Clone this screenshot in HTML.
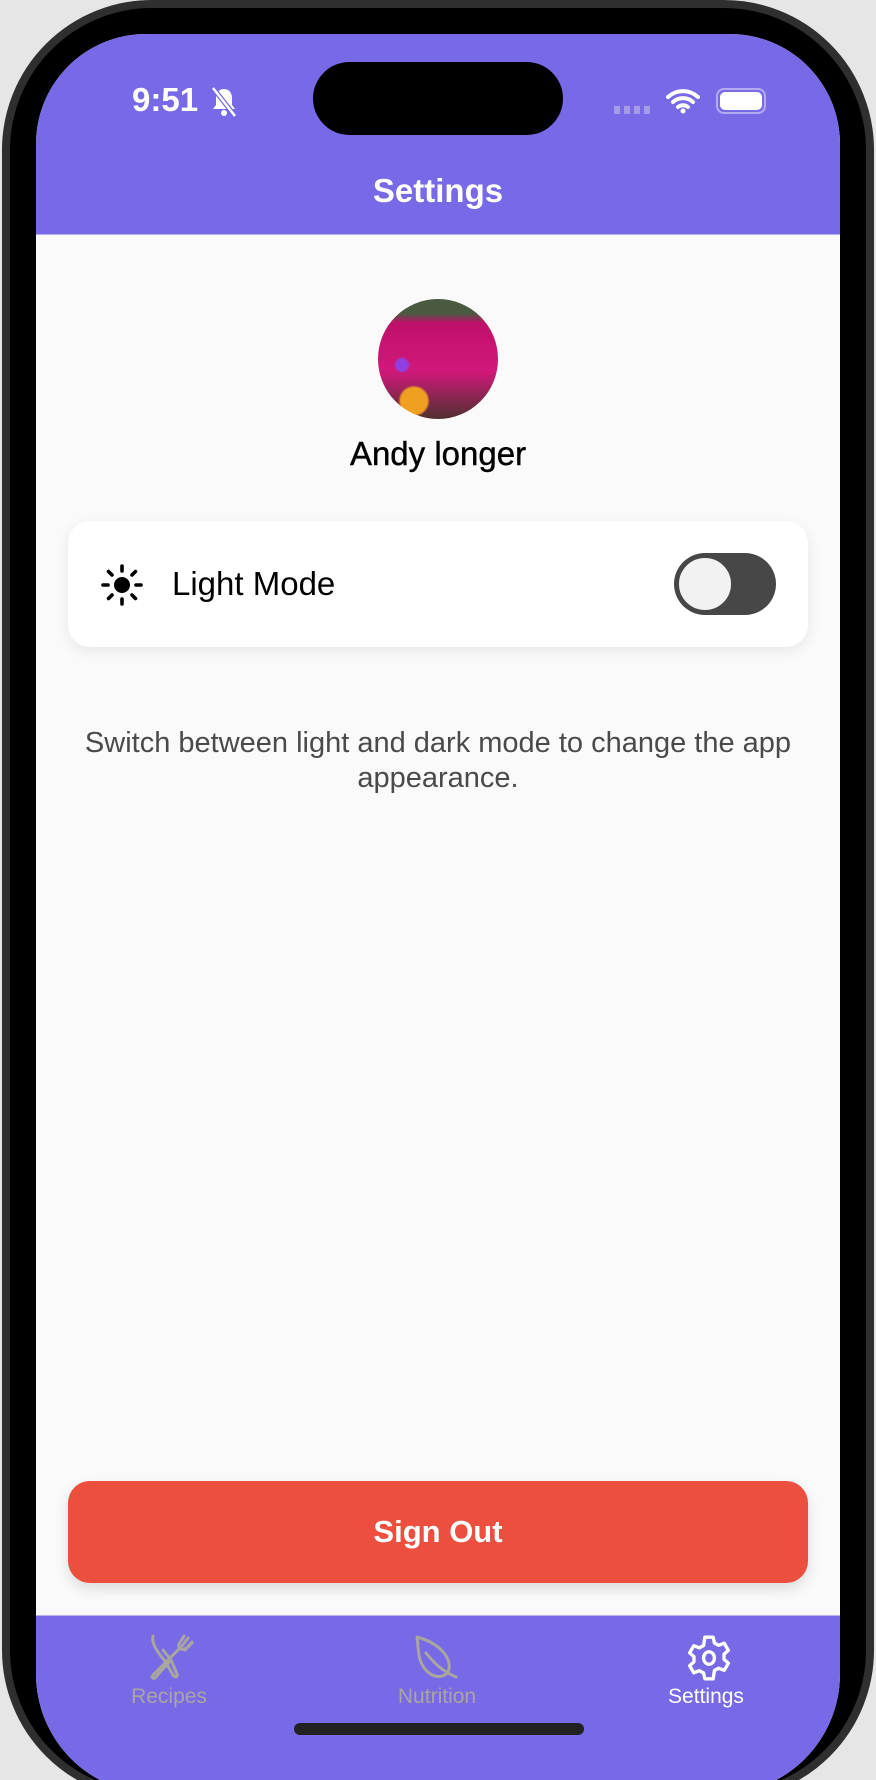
<!DOCTYPE html>
<html><head><meta charset="utf-8"><style>
*{margin:0;padding:0;box-sizing:border-box}
html{width:876px;height:1780px;overflow:hidden}
body{width:876px;height:1780px;overflow:hidden;background:#e6e6e6;font-family:"Liberation Sans",sans-serif;position:relative}
.frame{position:absolute;left:2px;top:0;width:872px;height:1800px;border-radius:150px;background:#000;border:8px solid #2f2f2f}
.screen{position:absolute;left:36px;top:34px;width:804px;height:1760px;border-radius:110px 110px 120px 120px;background:#fafafa;overflow:hidden}
.hdr{position:absolute;left:0;top:0;width:804px;height:201px;background:#7869e6;border-bottom:1px solid #b9b2ef}
.island{position:absolute;left:277px;top:28px;width:250px;height:73px;border-radius:37px;background:#000}
.time{position:absolute;left:96px;top:47px;color:#fff;font-size:33px;font-weight:bold}
.title{position:absolute;left:0;width:804px;top:138px;text-align:center;color:#fff;font-size:33px;font-weight:bold}
.av{position:absolute;left:342px;top:265px;width:120px;height:120px;border-radius:50%;
background:radial-gradient(circle at 30% 85%,#f0a020 0 10%,transparent 12%),radial-gradient(circle at 20% 55%,#9040e0 0 5%,transparent 7%),linear-gradient(#4a5a40 0 12%,#c0106a 20%,#d0187a 60%,#503030 100%)}
.name{position:absolute;left:0;width:804px;top:401px;text-align:center;font-size:33px;color:#000;-webkit-text-stroke:0.4px #000}
.card{position:absolute;left:32px;top:487px;width:740px;height:126px;background:#fff;border-radius:22px;box-shadow:0 4px 14px rgba(0,0,0,.08)}
.lm{position:absolute;left:104px;top:44px;font-size:33px;color:#000}
.tg{position:absolute;left:606px;top:32px;width:102px;height:62px;border-radius:31px;background:#474747}
.tg i{position:absolute;left:2px;top:2px;width:58px;height:58px;border-radius:50%;background:#f2f2f2;border:3px solid #474747}
.desc{position:absolute;left:0;width:804px;top:692px;text-align:center;font-size:29px;line-height:35px;color:#4a4a4a}
.btn{position:absolute;left:32px;top:1447px;width:740px;height:102px;border-radius:22px;background:#ec4f3e;color:#fff;font-size:31px;font-weight:bold;text-align:center;line-height:102px;box-shadow:0 6px 14px rgba(0,0,0,.12)}
.tab{position:absolute;left:0;top:1581px;width:804px;height:220px;background:#7869e6;border-top:1px solid #b9b2ef}
.tl{position:absolute;top:69px;width:200px;text-align:center;font-size:21px;color:#a9a6a0}
.home{position:absolute;left:258px;top:1689px;width:290px;height:12px;border-radius:6px;background:#222}
</style></head><body>
<div class="frame"></div>
<div class="screen">
<div class="hdr">
<div class="island"></div>
<div class="time">9:51</div>
<svg style="position:absolute;left:174px;top:52px" width="28" height="32" viewBox="0 0 28 32"><path d="M14 3c-5 0-8 4-8 9v7l-3 4h22l-3-4v-7c0-5-3-9-8-9z" fill="#fff"/><circle cx="14" cy="27" r="3" fill="#fff"/><path d="M3 2l22 28" stroke="#7869e6" stroke-width="5"/><path d="M3 2l22 28" stroke="#fff" stroke-width="2.5"/></svg>
<div style="position:absolute;left:578px;top:72px;width:36px;height:8px;background:repeating-linear-gradient(90deg,#a59be8 0 6px,transparent 6px 10px)"></div>
<svg style="position:absolute;left:630px;top:54px" width="34" height="26" viewBox="0 0 34 26"><path d="M2 9a22 22 0 0 1 30 0M7 14a15 15 0 0 1 20 0M12 19a8 8 0 0 1 10 0" stroke="#fff" stroke-width="4" fill="none" stroke-linecap="round"/><circle cx="17" cy="23" r="2.5" fill="#fff"/></svg>
<div style="position:absolute;left:680px;top:54px;width:50px;height:26px;border:2px solid #b3aaf0;border-radius:8px;padding:2px"><div style="width:100%;height:100%;background:#fff;border-radius:5px"></div></div>
<div class="title">Settings</div>
</div>
<div class="av"></div>
<div class="name">Andy longer</div>
<div class="card">
<svg style="position:absolute;left:32px;top:42px" width="44" height="44" viewBox="0 0 44 44"><circle cx="22" cy="22" r="8" fill="#000"/><g stroke="#000" stroke-width="3.6" stroke-linecap="round"><path d="M22 3v5M22 36v5M3 22h5M36 22h5M8.5 8.5l3.5 3.5M32 32l3.5 3.5M8.5 35.5l3.5-3.5M32 12l3.5-3.5"/></g></svg>
<div class="lm">Light Mode</div>
<div class="tg"><i></i></div>
</div>
<div class="desc">Switch between light and dark mode to change the app<br>appearance.</div>
<div class="btn">Sign Out</div>
<div class="tab">
<svg style="position:absolute;left:109px;top:17px" width="50" height="50" viewBox="0 0 50 50" fill="none" stroke="#a9a6a0" stroke-width="3" stroke-linecap="round" stroke-linejoin="round"><path d="M8 3c-2 8 6 18 12 25l8 14c2 3 5 2 4-1l-6-14-8-10"/><path d="M43 5l-6 8M47 9l-7 8M39 3l-5 8c-1 2 0 4 2 5 2 1 4 0 6-1l5-5"/><path d="M34 16l-26 26c-2 2 0 4 2 3l14-16"/></svg>
<svg style="position:absolute;left:376px;top:17px" width="50" height="50" viewBox="0 0 50 50" fill="none" stroke="#a9a6a0" stroke-width="3" stroke-linecap="round" stroke-linejoin="round"><path d="M5 4c2 14 0 26 12 36 8 6 18 4 20-4 2-12-10-26-32-32z"/><path d="M14 20c8 10 16 18 30 24"/></svg>
<svg style="position:absolute;left:648px;top:17px" width="50" height="50" viewBox="0 0 24 24" fill="none" stroke="#fff" stroke-width="1.6" stroke-linejoin="round"><path d="M10 2h4l.6 2.8 2 1.1 2.7-1 2 3.4-2.1 1.9v2.4l2.1 1.9-2 3.4-2.7-1-2 1.1L14 22h-4l-.6-2.8-2-1.1-2.7 1-2-3.4 2.1-1.9v-2.4L2.7 9.5l2-3.4 2.7 1 2-1.1z"/><ellipse cx="12" cy="12" rx="2.6" ry="3"/></svg>
<div class="tl" style="left:33px">Recipes</div>
<div class="tl" style="left:301px">Nutrition</div>
<div class="tl" style="left:570px;color:#fff">Settings</div>
</div>
<div class="home"></div>
</div>
</body></html>
